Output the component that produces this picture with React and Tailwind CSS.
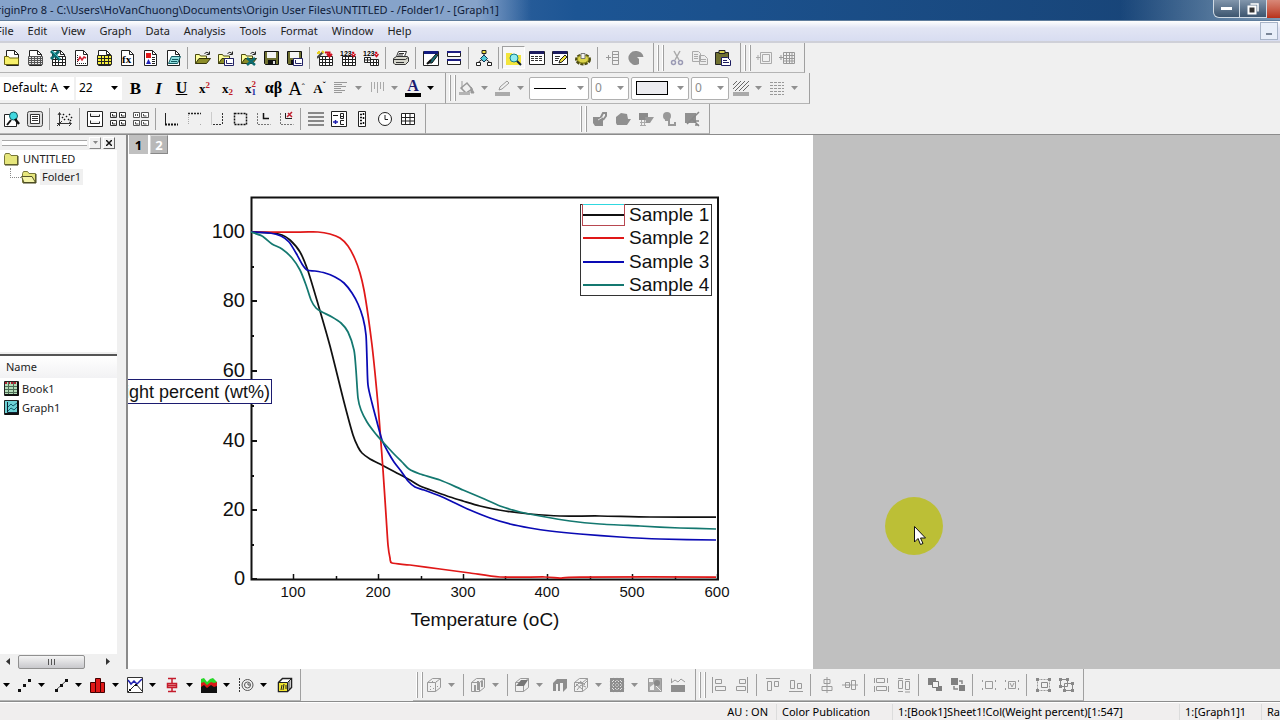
import React from 'react';

// toolbar glyphs, all on a 16x16 grid
const gray = '#9a9a9a';

const page = (
    <>
        <path d="M2.5 .5h8l4 4v11h-12z" fill="#fff" stroke="#222" />
        <path d="M10.5 .5v4h4" fill="none" stroke="#222" />
    </>
);

const grid = <path d="M2.5 6.5h13v9h-13zM2.5 9.5h13M2.5 12.5h13M5.5 6.5v9M8.5 6.5v9M12.5 6.5v9" fill="#fff" stroke="#222" />;

const openFolder = (
    <>
        <path d="M.5 13.5v-9h4l1 1.5h6v2.5" fill="#ffff9c" stroke="#4a4a10" />
        <path d="M.5 13.5l3.5-5h11.5l-4 5z" fill="#8c8c28" stroke="#33330a" />
        <path d="M9.5 3.5q2.5-2.5 4.5 0M14.5 1.5v3h-3" fill="none" stroke="#222" />
    </>
);

const floppy = (
    <>
        <path d="M.5 1.5h14v13h-13l-1-1z" fill="#6f7030" stroke="#111" />
        <path d="M3 2h9v6H3z" fill="#f4f4f4" />
        <path d="M4 10h8v5H4z" fill="#111" />
        <path d="M9 11h2v3H9z" fill="#ddd" />
    </>
);

const cube = (
    <path d="M1.5 5.5l5-4h8v9l-5 4h-8zM1.5 5.5h8v9M9.5 5.5l5-4" fill="none" stroke={gray} />
);

const icons = {
    newProject: <>{page}<path d="M.5 14.5v-8h4l1 1.5h9v6.5z" fill="#f7f06a" stroke="#6b6410" /></>,
    newSheet: <>{page}<path d="M1.5 6.5h14v8h-14zM1.5 8.5h14M1.5 10.5h14M1.5 12.5h14M4.5 6.5v8M7.5 6.5v8M10.5 6.5v8M13.5 6.5v8" fill="#e8e8e8" stroke="#555" /></>,
    newExcel: <>{page}{grid}<path d="M1 1l9 9M9 1L1 9" stroke="#0c6a70" strokeWidth="3" /><path d="M2 1l8 8" stroke="#36c0c4" /></>,
    newGraph: <>{page}<path d="M4.5 5v8.5H13" fill="none" stroke="#222" strokeDasharray="1 1" /><path d="M5 11l2-4 2 3 2-3 2 1" fill="none" stroke="#d02030" strokeWidth="1.5" /></>,
    newMatrix: <>{page}<path d="M1.5 5.5h14v9h-14zM1.5 8.5h14M1.5 11.5h14M5.5 5.5v9M8.5 5.5v9M12.5 5.5v9" fill="#f7f03a" stroke="#222" /></>,
    newFunction: <>{page}<text x="3" y="13" fontSize="11" fontWeight="bold" fontFamily="Liberation Serif, serif">fx</text></>,
    newLayout: <>{page}<path d="M4 3h5v5H4z" fill="#e01818" /><path d="M4 14l2.5-5L9 14z" fill="#22b" /><path d="M10 7.5h3M10 9.5h3M10 11.5h3M10 13.5h3" stroke="#222" /></>,
    newNotes: <>{page}<path d="M3.5 13.5l3-7h9l-3 7z" fill="#8fdede" stroke="#125a60" /><path d="M7 9.5h6M6 11.5h6" stroke="#125a60" /></>,
    open: openFolder,
    openTemplate: <>{openFolder}<path d="M6.5 8.5h9v7h-9z" fill="#fff" stroke="#226" /><path d="M8.5 10v3.5h6" fill="none" stroke="#226" /></>,
    openExcel: <>{openFolder}<path d="M6 8l8 7M14 8l-8 7" stroke="#0c6a70" strokeWidth="2.5" /></>,
    save: floppy,
    saveTemplate: <>{floppy}<path d="M6.5 8.5h9v7h-9z" fill="#fff" stroke="#226" /><path d="M8.5 10v3.5h6" fill="none" stroke="#226" /></>,
    importWizard: <>{grid}<path d="M0 8l6-6" stroke="#444" strokeWidth="2" /><path d="M5 1l2 2M2 1v3M0 3h3" stroke="#e8d020" strokeWidth="2" /><path d="M8 2.5h4.5V5M10 4l2.5 2.5L15 4" fill="none" stroke="#d01020" strokeWidth="2" /></>,
    importAscii: <>{grid}<text x="0" y="6" fontSize="7" fontWeight="bold" fontFamily="Liberation Sans, sans-serif">123</text><path d="M12 2.5h1.5V4M11.5 4L13.5 6.5 15.5 4" fill="none" stroke="#d01020" strokeWidth="1.5" /></>,
    importMulti: <><path d="M1.5 7.5h6v5h-6zM1.5 10h6M4.5 7.5v5M7.5 9.5h8v6h-8zM7.5 12.5h8M10.5 9.5v6M13.5 9.5v6" fill="#fff" stroke="#222" /><text x="0" y="6" fontSize="7" fontWeight="bold" fontFamily="Liberation Sans, sans-serif">123</text><path d="M12 2.5h1.5V4M11.5 4L13.5 6.5 15.5 4" fill="none" stroke="#d01020" strokeWidth="1.5" /></>,
    print: <><path d="M3.5 6.5l2-5h8l-2 5z" fill="#fff" stroke="#333" /><path d="M.5 8.5l3-2h11l1 1v4l-3 3H2l-1.5-1.5z" fill="#d6d6cc" stroke="#333" /><path d="M1 9.5h11.5l2.5-2M6 3.5h5M5 5h5M3 12.5h8" fill="none" stroke="#333" /></>,
    refresh: <><path d="M.5 1.5h15v14H.5z" fill="#fff" stroke="#222" /><path d="M1 1h14v3H1z" fill="#141c80" /><path d="M5 13l8-9 2 1-6 8z" fill="#187078" stroke="#111" /><path d="M4 14l4-4" stroke="#111" strokeWidth="2" /></>,
    duplicate: <><path d="M1.5 1.5h13v5h-13zM1.5 9.5h13v5h-13z" fill="#fff" stroke="#222" /><path d="M1 2h14M1 10h14" stroke="#1c1c80" strokeWidth="2" /></>,
    organize: <><path d="M8 4v8M2.5 12l5.5-4 5.5 4" fill="none" stroke="#222" /><path d="M6 .5h4v3H6z" fill="#f0e040" stroke="#222" /><path d="M8 5l3.5 3.5L8 12 4.5 8.5z" fill="#50c8d8" stroke="#135" /><path d="M.5 12.5h4v3h-4zM11.5 12.5h4v3h-4z" fill="#fff" stroke="#222" /></>,
    explorer: <><path d="M0 3h6l1 2h8v10H0z" fill="#f3e53c" /><circle cx="8" cy="8" r="4" fill="#90ecf0" stroke="#188088" /><path d="M11 11l4 4" stroke="#123" strokeWidth="2" /></>,
    results: <><path d="M.5 1.5h15v13H.5z" fill="#fff" stroke="#222" /><path d="M1 1h14v3H1z" fill="#1c1c60" /><path d="M2 6.5h12M2 8.5h12M2 10.5h12" stroke="#333" strokeDasharray="3 1" /></>,
    script: <><path d="M.5 1.5h15v13H.5z" fill="#fff" stroke="#222" /><path d="M1 1h14v3H1z" fill="#1c1c60" /><path d="M7 13l1-3 5-5 2 2-5 5z" fill="#f0e040" stroke="#222" /><path d="M3 6.5h5M3 8.5h4M3 10.5h3" stroke="#333" /></>,
    codeBuilder: <><ellipse cx="8" cy="9.5" rx="6.5" ry="4.5" fill="#d8cf30" stroke="#4c4a12" strokeWidth="3" strokeDasharray="3 1" /><ellipse cx="8" cy="9" rx="5.5" ry="4" fill="#dcd44c" stroke="#8c8a1c" /><path d="M6 3.5h4v5H6z" fill="#f4f4ee" stroke="#777" /></>,
    addColumn: <path d="M7.5 1.5h6v13h-6zM7.5 4.5h6M7.5 7.5h6M7.5 10.5h6M3.5 5v5M1 7.5h5" fill="none" stroke="#999" />,
    rescale: <path d="M8 1a7 7 0 1 0 3 13V9L9 7h6.500A7 7 0 0 0 8 1z" fill="#8e8e8e" />,
    cut: <><path d="M5 1l5 9M11 1L6 10" stroke="#aaa" strokeWidth="1.5" /><circle cx="4.5" cy="12.5" r="2" fill="none" stroke="#9a9ab4" strokeWidth="1.5" /><circle cx="11.5" cy="12.5" r="2" fill="none" stroke="#9a9ab4" strokeWidth="1.5" /></>,
    copy: <path d="M.5 1.5h6l2 2v8h-8zM2 4.5h4M2 6.5h4M2 8.5h4M7.5 5.5h5l3 3v6h-8zM9 9.5h5M9 11.5h5" fill="#ededed" stroke="#aaa" />,
    paste: <><path d="M.5 2.5h13v12H.5z" fill="#6f7030" stroke="#222" /><path d="M4 .5h6v3H4z" fill="#d8d050" stroke="#222" /><path d="M6.5 7.5h6l3 3v5h-9z" fill="#fff" stroke="#1c1c60" /><path d="M8 10.5h4M8 12.5h6" stroke="#1c1c60" /></>,
    addLayer: <path d="M4.5 2.5h11v11h-11zM6.5 4.5h7v7h-7zM2 5v5M0 7.5h4" fill="none" stroke="#aaa" />,
    addTable: <path d="M4.5 2.5h11v11h-11zM4.5 5.5h11M4.5 8.5h11M4.5 11h11M7.5 2.5v11M10.5 2.5v11M13 2.5v11M2 5v5M0 7.5h4" fill="none" stroke="#999" />,
    align: <path d="M1 2.5h13M1 4.5h8M1 6.5h12M1 8.5h7M1 10.5h11M1 12.5h8" stroke="#999" />,
    vertical: <path d="M2.5 2v10M5.5 2v7M8.5 2v11M11.5 2v7M14.5 2v9" stroke="#aaa" />,
    bucket: <><path d="M2 8l6-5 5 6-6 4z" fill="none" stroke="#999" strokeWidth="1.5" /><path d="M3 1v8M12 7l3 6h-3z" stroke="#999" fill="#999" /><path d="M0 12h11v3H0z" fill="#b4b4b4" /></>,
    pen: <><path d="M4 10l1-3 7-6 2 2-7 6z" fill="none" stroke="#999" /><path d="M0 12h15v4H0z" fill="#aaa" /></>,
    hatch: <><path d="M0 5l4-4M0 9l8-8M2 11L12 1M6 11L16 1M10 11l6-6" stroke="#666" /><path d="M0 12h16v4H0z" fill="#aaa" /></>,
    dashes: <path d="M1 2.5h14M1 5.5h14M1 8.5h14M1 11.5h14M1 14.5h14" stroke="#999" strokeDasharray="3 1" />,
    zoomData: <><path d="M.5 3.5h8l4 3v9H.5z" fill="#fff" stroke="#222" /><circle cx="9.5" cy="5" r="4" fill="#40d8e0" stroke="#145a60" /><path d="M11 8l4 5" stroke="#111" strokeWidth="2.5" /><path d="M3 14l4-5" stroke="#111" strokeWidth="2" /></>,
    fullScreen: <><rect x=".5" y=".5" width="15" height="15" rx="2" fill="#ddd" stroke="#444" /><path d="M3.5 3.5h9v9h-9zM5 5.5h6M5 7.5h6M5 9.5h6" fill="#fff" stroke="#333" /></>,
    scatterZoom: <><path d="M2.5 15V2M0 12.5h14M1 4l1.5-2.5L4 4M12 11l2.5 1.5L12 15M0 15l5-5" fill="none" stroke="#333" /><path d="M6 3h1v1H6zM9 5h1v1H9zM12 3h1v1h-1zM7 8h1v1H7zM11 8h1v1h-1zM14 6h1v1h-1zM5 6h1v1H5zM13 9h1v1h-1z" fill="#111" stroke="#111" strokeWidth=".5" /></>,
    layers2: <path d="M.5.5h15v15H.5zM3.5 2.5v3h9v-2M3.5 9.5v3h9v-2" fill="#fff" stroke="#222" />,
    layers4: <path d="M.5 1.5h6v5h-6zM9.5 1.5h6v5h-6zM.5 9.5h6v5h-6zM9.5 9.5h6v5h-6zM2.5 3v2h3M11.5 3v2h3M2.5 11v2h3M11.5 11v2h3" fill="#fff" stroke="#333" />,
    layersMany: <path d="M.5 1.5h6v5h-6zM8.5 1.5h7v5h-7zM.5 9.5h6v5h-6zM8.5 9.5h7v5h-7zM2.5 3v2M4.5 3v2M10.5 3v2h3M2.5 11v2h3M10.5 11v2h3" fill="#fff" stroke="#555" />,
    axisBL: <><path d="M2.5 2v11" stroke="#222" /><path d="M2 13.5h13" stroke="#111" strokeWidth="2" strokeDasharray="2 1" /></>,
    axisTop: <><path d="M2 2.5h13" stroke="#222" strokeWidth="1.5" strokeDasharray="2 1" /><path d="M2.5 4v10M14 13.5h1" stroke="#aaa" strokeDasharray="1 1" /></>,
    axisRight: <><path d="M2.5 1v13" stroke="#ccc" /><path d="M13.5 2v12M4 13.5h9" stroke="#333" strokeDasharray="2 1" fill="none" /></>,
    axisBox: <path d="M2.5 2.5h12v11h-12z" fill="none" stroke="#111" strokeWidth="1.5" strokeDasharray="2 1" />,
    axisInset: <><path d="M2.5 2v11.5h13" fill="none" stroke="#777" strokeDasharray="2 1" /><path d="M8.5 2v5.5H14" fill="none" stroke="#111" strokeWidth="1.5" /></>,
    axisInsetData: <><path d="M2.5 2v11.5h13" fill="none" stroke="#777" strokeDasharray="2 1" /><path d="M7.5 2v5.5H14" fill="none" stroke="#222" /><path d="M9 6l5-5M10 2l4 4" stroke="#c02030" strokeWidth="1.5" /></>,
    lines: <path d="M0 2h16M0 6h16M0 10h16M0 14h16" stroke="#888" strokeWidth="2" />,
    legend: <><path d="M.5.5h15v15H.5z" fill="#fff" stroke="#222" /><path d="M2 4.5h5" stroke="#111" /><path d="M2 11h5M4.5 9v4" stroke="#2020b0" strokeWidth="1.5" /><path d="M9.5 2.5h3v5h-3zM9.5 5.5h3M13 9.5H9.5v4H13" fill="none" stroke="#222" /></>,
    scaleBar: <><path d="M4.5.5h7v15h-7z" fill="#fff" stroke="#222" /><path d="M6 3.5h2M6 6.5h2M6 9.5h2M6 12.5h2M9.5 2v2M9.5 6v2M9.5 11v2" stroke="#111" strokeWidth="1.5" /></>,
    clock: <><circle cx="8" cy="8" r="6.5" fill="#fff" stroke="#222" /><path d="M8 4v4.5h3" fill="none" stroke="#222" /></>,
    table: <path d="M1.5 2.5h13v11h-13zM1.5 6.5h13M1.5 10h13M5.5 2.5v11M10 2.5v11" fill="#fff" stroke="#222" />,
    mask1: <><path d="M1 6h10v9H3l-2-3z" fill="#8e8e8e" /><path d="M8 8l3-6h3v3l-3 4" fill="none" stroke="#8e8e8e" strokeWidth="2" /><path d="M6 9l5-3" stroke="#ddd" /></>,
    mask2: <path d="M1 6l5-4 6 1 1 5h3l-4 6H2l-1-2z" fill="#909090" />,
    mask3: <><path d="M1 2h9v7H1z" fill="#8a8a8a" /><path d="M7 6h9l-4 6H8z" fill="#999" /><path d="M2 11.5h6M2 14.5h6M3.5 9v6M6.5 9v6" stroke="#aaa" /></>,
    mask4: <><circle cx="6" cy="5" r="4" fill="#999" /><path d="M4 9h4v5h6v-3" stroke="#999" fill="none" strokeWidth="2" /></>,
    mask5: <><path d="M1 2h11v10H1z" fill="#909090" /><path d="M15 1L3 13M8 8l7 7M10 10h5M11 14h4" stroke="#888" strokeWidth="1.5" /></>,
    scatter: <path d="M2 12h3v3H2zM7 7h3v3H7zM12 2h3v3h-3z" fill="#111" />,
    lineSymbol: <><path d="M3 13L14 3" stroke="#444" /><path d="M2 12h3v3H2zM7 7h3v3H7zM12 2h3v3h-3z" fill="#111" /></>,
    column: <path d="M.5 5.5h5v10h-5zM5.5 1.5h5v14h-5zM10.5 5.5h4v10h-4z" fill="#e01818" stroke="#400" />,
    multiPlot: <><path d="M.5.5h15v15H.5z" fill="#fff" stroke="#333" /><path d="M1 3l3 4 3-3 3 3 5-5" fill="none" stroke="#2424b0" strokeWidth="1.5" /><path d="M1 15l8-8 6 7" fill="none" stroke="#222" /><path d="M2 12h2v2H2zM8 7h2v2H8z" fill="#111" /></>,
    boxPlot: <path d="M4 1.5h8M8 2v4M3.5 6.5h9v4h-9zM3 8.5h10M8 11v4M4 14.5h8" fill="#f5b8b8" stroke="#c41c2c" strokeWidth="1.5" />,
    area: <><path d="M0 2l3-1 3 4 3-3 3-1 4 4v10H0z" fill="#28d828" /><path d="M0 6l3-1 3 3 4-3 3 1 3-1v9H0z" fill="#d81818" /><path d="M0 10l3-2 3 3 4-3 3 2 3-1v7H0z" fill="#111" /></>,
    polar: <><path d="M1.5 1v14" stroke="#333" strokeDasharray="2 1" /><circle cx="9.5" cy="8" r="5.5" fill="none" stroke="#555" /><circle cx="9.5" cy="8" r="3" fill="none" stroke="#555" /><path d="M9 7h2v2" fill="none" stroke="#555" /></>,
    cube3d: <><path d="M1.5 5.5l4-4h9v9l-4 4h-9z" fill="#fff" stroke="#222" strokeWidth="1.5" /><path d="M2 6h8v8H2z" fill="#f0e430" /><path d="M10.5 14V5.5l4-4M2 5.5h8.5M4 13l1-5M6 13l1-6M9 12V8M12 4v8" fill="none" stroke="#222" /></>,
    cubeDots: <>{cube}<path d="M4 9h1v1H4zM7 11h1v1H7zM6 4h1v1H6zM10 4h1v1h-1zM11 9h1v1h-1zM4 12h1v1H4z" fill={gray} /></>,
    cubeBars: <>{cube}<path d="M4 8h2v6H4zM7 4h2v9H7zM11 4h2v6h-2z" fill={gray} /></>,
    cubeSurface: <>{cube}<path d="M2 9l5-6h7l-4 6z" fill="#777" /></>,
    cubeWalls: <path d="M1 6l4-4h10v9l-4 4V6H8v8H6V7H4v7H1z" fill="#8e8e8e" />,
    cubeWire: <>{cube}<path d="M2 10l4-4 5 1 3-3M4 13l4-5 5 2M3 7l6 5M7 4l5 4" fill="none" stroke={gray} /></>,
    contour: <><path d="M1 1h14v14H1z" fill="#8e8e8e" /><path d="M0 4.5h16M0 8h16M0 11.5h16M4.5 0v16M8 0v16M11.5 0v16" stroke="#e4e4e4" strokeDasharray="1 2" /></>,
    image: <><path d="M1.5 1.5h13v13h-13z" fill="#aaa" stroke={gray} /><path d="M2 2h4v3H2zM3 10l4-3v6H3z" fill="#eee" /><circle cx="10" cy="6" r="3" fill="#888" /><path d="M9 9l5 5" stroke="#eee" /></>,
    profile: <><path d="M1 8h14v7H1z" fill="#8e8e8e" /><path d="M1.5 6V1.5M1 6l4-3 3 2 3-3 4 3" fill="none" stroke={gray} /></>,
    alignLeft: <path d="M1.5 0v16M4.5 2.5h6v4h-6zM4.5 9.5h10v4h-10z" fill="none" stroke={gray} />,
    alignRight: <path d="M13.5 0v16M5.5 2.5h6v4h-6zM2.5 9.5h9v4h-9z" fill="none" stroke={gray} />,
    alignTop: <path d="M1 1.5h14M2.5 4.5h4v9h-4zM9.5 4.5h4v5h-4z" fill="none" stroke={gray} />,
    alignBottom: <path d="M1 14.5h14M2.5 3.5h4v8h-4zM9.5 6.5h4v5h-4z" fill="none" stroke={gray} />,
    centerV: <path d="M8 0v16M5 2.5h6v4H5zM3 9.5h10v4H3z" fill="none" stroke={gray} />,
    centerH: <path d="M0 8h16M3.5 5.5h4v5h-4zM9.5 3.5h4v9h-4z" fill="none" stroke={gray} />,
    sameWidth: <path d="M3.5 1.5h8v4h-8zM3.5 9.5h10v4h-10zM1.5 1v5M14.5 1v5M1.5 9v6M15.5 9v6" fill="none" stroke={gray} />,
    sameHeight: <path d="M2.5 3.5h4v8h-4zM9.5 4.5h4v8h-4zM2 1.5h5M2 14.5h5M9 2.5h5M9 15h5" fill="none" stroke={gray} />,
    front: <><path d="M1 1h8v7H1zM9 9h6v5H9z" fill="#808080" /><path d="M5.5 4.5h6v6h-6z" fill="#f4f4f4" stroke="#777" /></>,
    back: <><path d="M1 1h7v7H1zM9 8h6v6H9z" fill="#808080" /><path d="M4 9v3h4M9 4h3v3" fill="none" stroke="#888" strokeWidth="1.5" /></>,
    frontData: <path d="M4.5 4.5h7v7h-7zM1.5 3v2M1.5 11v2M14.5 3v2M14.5 11v2" fill="none" stroke={gray} />,
    backData: <path d="M4.5 4.5h7v7h-7zM6 6l2 4 2-4M1.5 3v2M1.5 11v2M14.5 3v2M14.5 11v2" fill="none" stroke={gray} />,
    group: <><path d="M2.5 2.5h12v11h-12z" fill="none" stroke={gray} strokeDasharray="2 1" /><path d="M1 1h3v3H1zM13 1h3v3h-3zM1 12h3v3H1zM13 12h3v3h-3z" fill="#888" /><path d="M6.5 5.5h6v5h-6z" fill="none" stroke="#888" /></>,
    ungroup: <><path d="M2.5 2.5h7v7h-7zM6.5 6.5h8v7h-8z" fill="none" stroke="#888" /><path d="M1 1h3v3H1zM8 1h3v3H8zM1 8h3v3H1zM5 12h3v3H5zM13 12h3v3h-3zM13 5h3v3h-3z" fill="#888" /></>,
};

const textIcons = {
    bold: <span className="text-[17px] font-bold">B</span>,
    italic: <span className="text-[17px] font-bold italic">I</span>,
    underline: <span className="text-[16px] font-bold underline">U</span>,
    superscript: <span className="text-[13px] font-bold">x<sup className="text-[9px] text-[#c01c28]">2</sup></span>,
    subscript: <span className="text-[13px] font-bold">x<sub className="text-[9px] text-[#c01c28]">2</sub></span>,
    supersub: (
        <span className="flex items-center text-[13px] font-bold">
            x
            <span className="flex flex-col text-[9px] leading-[8px]">
                <span className="text-[#c01c28]">2</span>
                <span className="text-[#1c2ca0]">1</span>
            </span>
        </span>
    ),
    greek: <span className="text-[16px] font-bold">αβ</span>,
    grow: <span className="text-[19px]">A<sup className="text-[9px]">ˆ</sup></span>,
    shrink: <span className="text-[13px] font-bold">A<sup className="text-[9px]">ˇ</sup></span>,
    fontColor: <span className="flex h-[17px] items-center border-b-4 border-black px-0.5 text-[16px] font-bold text-[#1c1c70]">A</span>,
};

const dimDrops = ['align', 'vertical', 'bucket', 'pen', 'hatch', 'dashes', 'cubeDots', 'cubeBars', 'cubeSurface', 'cubeWire', 'contour'];

const Arrow = ({ dim }) => (
    <svg width="7" height="4" viewBox="0 0 7 4" className={dim ? 'text-[#909090]' : 'text-black'}>
        <path d="M0 0h7L3.5 4z" fill="currentColor" />
    </svg>
);

const Glyph = ({ name }) =>
    textIcons[name] || (
        <svg width="16" height="16" viewBox="0 0 16 16">
            {icons[name]}
        </svg>
    );

const ToolButton = ({ name, pressed }) => (
    <button
        aria-label={name}
        className={`flex h-[23px] w-[23px] shrink-0 items-center justify-center font-['Liberation_Serif',serif] leading-none text-black ${
            pressed ? 'border border-[#a0a0a0] border-r-white border-b-white bg-[#f8f8f8]' : ''
        }`}
    >
        <Glyph name={name} />
    </button>
);

const DropButton = ({ name }) => (
    <div className="flex h-[23px] w-[36px] shrink-0 items-center">
        <button aria-label={name} className="flex w-[20px] items-center justify-center font-['Liberation_Serif',serif] leading-none">
            <Glyph name={name} />
        </button>
        <button aria-label={`${name} options`} className="flex h-full w-[14px] items-center justify-center">
            <Arrow dim={dimDrops.includes(name)} />
        </button>
    </div>
);

// "|" is a separator, a trailing ">" adds the drop-down arrow
const Tools = ({ items, loose }) =>
    items.map((item, i) => {
        if (item === '|') return <div key={i} className={`ml-[3px] h-[22px] w-px shrink-0 bg-[#a0a0a0] ${loose ? 'mr-1' : 'mr-[3px]'}`} />;
        if (item.endsWith('>')) return <DropButton key={i} name={item.slice(0, -1)} />;
        return <ToolButton key={i} name={item} pressed={item === 'explorer'} />;
    });

const Grip = () => (
    <div className="mr-px flex h-full shrink-0 items-center gap-[3px] pl-[3px]">
        <div className="h-[26px] w-[2px] border-r border-[#a0a0a0] bg-white" />
        <div className="h-[26px] w-[2px] border-r border-[#a0a0a0] bg-white" />
    </div>
);

const Bar = ({ children, className = '' }) => (
    <div className={`flex h-full shrink-0 items-center border-r border-b border-r-[#a0a0a0] border-b-[#b4b4b4] pr-1.5 ${className}`}>{children}</div>
);

const Combo = ({ label, value, width, dim, children }) => (
    <div className={`relative mr-0.5 flex h-[23px] shrink-0 items-center ${width} ${dim ? 'rounded-xs border border-[#b0b0b0] bg-white' : 'bg-white'}`}>
        <select aria-label={label} className={`h-full w-full appearance-none truncate pl-[3px] text-[12px] ${dim ? 'text-[#8c8c8c]' : 'text-black'}`}>
            <option>{value}</option>
        </select>
        {children}
        <div className="pointer-events-none absolute right-1 flex">
            <Arrow dim={dim} />
        </div>
    </div>
);

const menus = ['File', 'Edit', 'View', 'Graph', 'Data', 'Analysis', 'Tools', 'Format', 'Window', 'Help'];

const TitleBar = () => (
    <header className="flex h-[21px] shrink-0 items-center justify-between overflow-hidden border-b border-[#5f7c9c] bg-linear-to-r from-[#7e9dc6] via-[#1c5594] via-45% to-[#174172]">
        <h1 className="-ml-3 flex h-full items-center bg-linear-to-r from-[#86a3ca] from-90% to-transparent pr-8 whitespace-pre text-[#101c38]">
            OriginPro 8 - C:\Users\HoVanChuong\Documents\Origin User Files\UNTITLED - /Folder1/ - [Graph1]
        </h1>
        <div className="flex h-full w-[160px] items-start justify-end bg-linear-to-r from-transparent to-[#7d9ab5]">
            <button aria-label="Minimize" className="flex h-[18px] w-[27px] items-center justify-center rounded-bl-md border border-t-0 border-[#d0dae4] bg-linear-to-b from-[#8296ac] to-[#3c556f]">
                <span className="h-[3px] w-[11px] bg-white" />
            </button>
            <button aria-label="Restore" className="flex h-[18px] w-[27px] items-center justify-center border-r border-b border-[#d0dae4] bg-linear-to-b from-[#8296ac] to-[#3c556f]">
                <svg width="12" height="12" viewBox="0 0 12 12">
                    <path d="M3.5 1h7.5v7.5" fill="none" stroke="#fff" strokeWidth="1.5" />
                    <path d="M1.5 3.5h7v7h-7z" fill="#333" stroke="#fff" strokeWidth="2" />
                </svg>
            </button>
            <button aria-label="Close" className="h-[18px] w-[13px] bg-linear-to-b from-[#d88878] to-[#b83018]" />
        </div>
    </header>
);

const MenuBar = () => (
    <nav className="flex h-[22px] shrink-0 items-center justify-between border-b-2 border-[#cfd0d8] bg-linear-to-b from-white via-[#e2e5f4] via-35% to-[#d8ddf1]">
        <div className="-ml-1 flex gap-3.5 text-[#222]">
            {menus.map((menu) => (
                <button key={menu}>{menu}</button>
            ))}
        </div>
        <button aria-label="Minimize window" className="mr-0.5 flex h-[18px] w-[18px] items-end justify-center border border-[#a8b4c8] bg-[#e8eef9] pb-1">
            <span className="h-[2px] w-[6px] bg-[#7a8698]" />
        </button>
    </nav>
);

const Toolbars = () => (
    <div className="shrink-0 bg-[#f0f0f0]">
        <div className="flex h-[30px]">
            <Bar>
                <Tools items={['newProject', 'newSheet', 'newExcel', 'newGraph', 'newMatrix', 'newFunction', 'newLayout', 'newNotes', '|', 'open', 'openTemplate', 'openExcel', 'save', 'saveTemplate', '|', 'importWizard', 'importAscii', 'importMulti', '|', 'print', '|', 'refresh', 'duplicate', '|', 'organize', '|', 'explorer', 'results', 'script', 'codeBuilder', '|', 'addColumn', 'rescale']} />
            </Bar>
            <Bar>
                <Grip />
                <Tools items={['cut', 'copy', 'paste']} />
            </Bar>
            <Bar>
                <Grip />
                <Tools items={['addLayer', 'addTable']} />
            </Bar>
        </div>
        <div className="flex h-[31px]">
            <Bar>
                <Combo label="Font" value="Default: A" width="w-[74px]" />
                <Combo label="Font size" value="22" width="w-[46px]" />
                <Tools items={['bold', 'italic', 'underline', 'superscript', 'subscript', 'supersub', 'greek', 'grow', 'shrink', 'align>', 'vertical>', 'fontColor>']} />
            </Bar>
            <Bar>
                <Grip />
                <Tools items={['bucket>', 'pen>']} />
                <Combo label="Line style" width="w-[60px]" dim>
                    <span className="pointer-events-none absolute left-1 h-px w-8 bg-black" />
                </Combo>
                <Combo label="Line width" value="0" width="w-[38px]" dim />
                <Combo label="Border color" width="w-[58px]" dim>
                    <span className="pointer-events-none absolute left-1 h-[14px] w-8 border border-black bg-[#ececf0]" />
                </Combo>
                <Combo label="Border width" value="0" width="w-[38px]" dim />
                <Tools items={['hatch>', 'dashes>']} />
            </Bar>
        </div>
        <div className="flex h-[31px] border-b border-[#8c8c8c]">
            <Bar>
                <Tools items={['zoomData', 'fullScreen', '|', 'scatterZoom', '|', 'layers2', 'layers4', 'layersMany', '|', 'axisBL', 'axisTop', 'axisRight', 'axisBox', 'axisInset', 'axisInsetData', '|', 'lines', 'legend', 'scaleBar', 'clock', 'table']} />
            </Bar>
            <div className="w-[151px] border-b border-[#b4b4b4]" />
            <Bar>
                <Grip />
                <Tools items={['mask1', 'mask2', 'mask3', 'mask4', 'mask5']} />
            </Bar>
        </div>
    </div>
);

const Folder = ({ open }) => (
    <svg width="16" height="14" viewBox="0 0 16 14" className="shrink-0">
        <path d="M1.5 12.5v-9l1-2h4l1.5 2h6.5v9z" fill="#e6e67c" stroke="#77773a" />
        {open && <path d="M3 12.5L.5 6.5h10.5l3.5 6z" fill="#f4f4a8" stroke="#55552a" />}
        <path d="M2 13h13V4" fill="none" stroke="#44441c" />
    </svg>
);

const files = [
    {
        name: 'Book1',
        icon: (
            <>
                <path d="M.5.5h14v14H.5z" fill="#b4dcb8" stroke="#222" />
                <path d="M1 2h13" stroke="#b02030" strokeWidth="2" strokeDasharray="2 1" />
                <path d="M1 5.5h13M1 8.5h13M1 11.5h13M4.5 1v13M9.5 1v13" stroke="#4c6c54" />
                <path d="M1 14h13.5M14 1v13" stroke="#111" strokeWidth="2" />
            </>
        ),
    },
    {
        name: 'Graph1',
        icon: (
            <>
                <path d="M.5.5h14v14H.5z" fill="#6cd0d4" stroke="#222" />
                <path d="M3.5 2v10.5H13" fill="none" stroke="#123" />
                <path d="M4 7l3-3 2 2 4-3M4 11l3-3 3 2 3-3" fill="none" stroke="#126070" />
                <path d="M1 14h13.5M14 1v13" stroke="#111" strokeWidth="2" />
            </>
        ),
    },
];

const ProjectExplorer = () => (
    <aside className="flex w-[128px] shrink-0 flex-col border-r-2 border-[#8a8a8a] bg-[#f0f0f0] pr-[9px] text-[#222]">
        <div className="flex h-[15px] shrink-0 items-center gap-[2px] pr-0.5 pl-0.5">
            <div className="h-[6px] flex-1 border-y border-[#a8a8a8] bg-white" />
            <button aria-label="Panel menu" className="flex h-[12px] w-[12px] items-center justify-center border border-white border-r-[#888] border-b-[#888]">
                <svg width="5" height="3" viewBox="0 0 5 3"><path d="M0 0h5L2.5 3z" fill="#888" /></svg>
            </button>
            <button aria-label="Close panel" className="flex h-[12px] w-[12px] items-center justify-center border border-white border-r-[#666] border-b-[#666]">
                <svg width="6" height="6" viewBox="0 0 6 6"><path d="M0 0l6 6M6 0L0 6" stroke="#111" strokeWidth="1.5" /></svg>
            </button>
        </div>
        <div className="h-[202px] shrink-0 bg-white pl-[3px]">
            <div className="flex h-[18px] items-center gap-1">
                <Folder />
                <span>UNTITLED</span>
            </div>
            <div className="flex h-[18px] items-center pl-[7px]">
                <div className="h-[10px] w-[11px] self-start border-b border-l border-dotted border-[#888]" />
                <Folder open />
                <span className="ml-[3px] bg-[#f0f0f0] px-0.5">Folder1</span>
            </div>
        </div>
        <div className="mt-0.5 flex h-[24px] shrink-0 items-center border-t-2 border-[#555] bg-linear-to-b from-white to-[#f2f2f4] pl-1.5">Name</div>
        <ul className="flex-1 bg-white pt-px pl-1">
            {files.map((file) => (
                <li key={file.name} className="flex h-[19px] items-center gap-[3px]">
                    <svg width="15" height="15" viewBox="0 0 15 15">{file.icon}</svg>
                    <span>{file.name}</span>
                </li>
            ))}
        </ul>
        <div className="flex h-[15px] shrink-0 items-center gap-1.5 pl-1">
            <button aria-label="Scroll left" className="flex w-[8px] justify-center">
                <svg width="4" height="7" viewBox="0 0 4 7"><path d="M4 0v7L0 3.5z" fill="#333" /></svg>
            </button>
            <div className="flex h-[14px] w-[67px] items-center justify-center gap-[2px] rounded-xs border border-[#909090] bg-linear-to-b from-[#f4f4f4] to-[#c8c8cc]">
                <span className="h-[6px] w-px bg-[#555]" />
                <span className="h-[6px] w-px bg-[#555]" />
                <span className="h-[6px] w-px bg-[#555]" />
            </div>
            <button aria-label="Scroll right" className="ml-auto flex w-[18px] justify-center">
                <svg width="4" height="7" viewBox="0 0 4 7"><path d="M0 0v7l4-3.5z" fill="#333" /></svg>
            </button>
        </div>
    </aside>
);

const series = [
    {
        name: 'Sample 1',
        color: '#111111',
        points: [[251, 232], [272, 233], [282, 235], [290, 240], [300, 252], [308, 271], [318, 304], [330, 346], [344, 402], [353, 435], [358, 447], [362, 453], [370, 459], [380, 464], [395, 472], [410, 480], [420, 486], [436, 492], [450, 497], [463, 501], [480, 506], [505, 511], [530, 514], [560, 516], [600, 516], [650, 517], [716, 517]],
    },
    {
        name: 'Sample 2',
        color: '#e01818',
        points: [[251, 232], [300, 232], [318, 232], [330, 234], [340, 238], [348, 246], [355, 259], [360, 273], [364, 290], [368, 315], [372, 345], [375, 373], [378, 405], [380, 430], [383, 470], [386, 515], [388, 545], [390, 558], [392, 563], [410, 565], [440, 569], [470, 573], [500, 577], [545, 577], [560, 578], [580, 577], [716, 577]],
    },
    {
        name: 'Sample 3',
        color: '#0a0ab4',
        points: [[251, 232], [270, 233], [281, 236], [289, 242], [296, 253], [302, 264], [307, 270], [315, 271], [325, 273], [335, 277], [344, 283], [352, 293], [358, 304], [363, 318], [366, 335], [367, 360], [368, 385], [372, 403], [377, 422], [382, 440], [388, 452], [394, 462], [401, 471], [408, 481], [415, 487], [424, 490], [440, 496], [455, 503], [470, 510], [490, 518], [510, 524], [530, 528], [550, 531], [580, 534], [620, 537], [660, 539], [716, 540]],
    },
    {
        name: 'Sample 4',
        color: '#147870',
        points: [[251, 232], [262, 236], [272, 244], [282, 249], [292, 258], [300, 270], [306, 285], [311, 300], [316, 308], [322, 312], [332, 317], [341, 323], [348, 332], [354, 350], [356, 370], [358, 398], [361, 410], [367, 422], [375, 433], [382, 441], [394, 454], [402, 462], [409, 469], [420, 474], [440, 480], [463, 490], [482, 498], [500, 506], [520, 512], [540, 516], [570, 521], [600, 524], [640, 526], [680, 528], [716, 529]],
    },
];

// smooth path through the points
const toPath = (pts) =>
    pts.reduce((d, p, i) => {
        if (i === 0) return `M${p[0]} ${p[1]}`;
        const p0 = pts[i - 2] || pts[i - 1];
        const p1 = pts[i - 1];
        const p3 = pts[i + 1] || p;
        return `${d}C${p1[0] + (p[0] - p0[0]) / 8} ${p1[1] + (p[1] - p0[1]) / 8} ${p[0] - (p3[0] - p1[0]) / 8} ${p[1] - (p3[1] - p1[1]) / 8} ${p[0]} ${p[1]}`;
    }, '');

const yTicks = [[100, 232], [80, 301], [60, 371], [40, 441], [20, 510], [0, 579]];
const xTicks = [[100, 293], [200, 378], [300, 463], [400, 547], [500, 632], [600, 717]];

const Chart = () => (
    <svg width="685" height="513" viewBox="128 154 685 513" fontFamily="Liberation Sans, Arial, sans-serif" fill="#111">
        <rect x="251.5" y="197.5" width="466.5" height="382" fill="none" stroke="#111" strokeWidth="2" />
        {yTicks.map(([value, y]) => (
            <g key={value}>
                <path d={`M251 ${y}h6`} stroke="#111" strokeWidth="2" />
                {value > 0 && <path d={`M251 ${y + 35}h3`} stroke="#111" strokeWidth="2" />}
                <text x="245" y={y + 6} fontSize="20" textAnchor="end">{value}</text>
            </g>
        ))}
        {xTicks.map(([value, x]) => (
            <g key={value}>
                <path d={`M${x + 0.5} 579v-5`} stroke="#111" strokeWidth="1.5" />
                {value > 100 && <path d={`M${x - 41.5} 579v-3`} stroke="#111" strokeWidth="1.5" />}
                <text x={x} y="597" fontSize="15" textAnchor="middle">{value}</text>
            </g>
        ))}
        {series.map((s) => (
            <path key={s.name} d={toPath(s.points)} fill="none" stroke={s.color} strokeWidth="1.75" />
        ))}
        <text x="485" y="626" fontSize="19" textAnchor="middle">Temperature (oC)</text>

        <rect x="100.5" y="379.5" width="171" height="24" fill="#fff" stroke="#1c1c70" />
        <text x="270" y="398" fontSize="18" textAnchor="end">Weight percent (wt%)</text>

        <rect x="580.5" y="204.5" width="131" height="91" fill="#fff" stroke="#333" />
        <rect x="582.5" y="204.5" width="42" height="21" fill="none" stroke="#b84850" />
        <path d="M583 204.5h41" stroke="#30d8e0" />
        {series.map((s, i) => (
            <g key={s.name}>
                <path d={`M583 ${215 + Math.round(i * 23.4)}h41`} stroke={s.color} strokeWidth="2" />
                <text x="629" y={221 + Math.round(i * 23.4)} fontSize="19">{s.name}</text>
            </g>
        ))}
    </svg>
);

const GraphWindow = () => (
    <section className="w-[685px] shrink-0 overflow-hidden bg-white">
        <div className="flex h-[19px] items-stretch gap-0.5 pl-px text-[13px] font-bold">
            <button className="w-[19px] bg-[#c0c0c0] text-black">1</button>
            <button className="w-[18px] border border-[#d8d8d8] border-r-[#888] border-b-[#888] bg-[#b8b8b8] text-white">2</button>
        </div>
        <Chart />
    </section>
);

const BottomToolbar = () => (
    <div className="flex h-[33px] shrink-0 items-stretch border-b border-[#8c8c8c] bg-[#f0f0f0]">
        <Bar className="w-[301px] gap-px">
            <button aria-label="line options" className="flex w-[13px] shrink-0 items-center justify-center"><Arrow /></button>
            <Tools items={['scatter>', 'lineSymbol>', 'column>', 'multiPlot>', 'boxPlot>', 'area>', 'polar>', 'cube3d']} />
        </Bar>
        <div className="w-[112px]" />
        <Bar>
            <Grip />
            <Tools loose items={['cubeDots>', '|', 'cubeBars>', '|', 'cubeSurface>', 'cubeWalls', 'cubeWire>', 'contour>', 'image', 'profile']} />
        </Bar>
        <Bar>
            <Grip />
            <Tools loose items={['alignLeft', 'alignRight', '|', 'alignTop', 'alignBottom', '|', 'centerV', 'centerH', '|', 'sameWidth', 'sameHeight', '|', 'front', 'back', '|', 'frontData', 'backData', '|', 'group', 'ungroup']} />
        </Bar>
    </div>
);

const StatusBar = () => (
    <footer className="flex h-[18px] shrink-0 items-center justify-end overflow-hidden border-t border-white bg-[#f0eeee] whitespace-nowrap text-black">
        <span className="border-r border-[#dcdcdc] pr-2">AU : ON</span>
        <span className="w-[116px] border-r border-[#dcdcdc] pl-[5px]">Color Publication</span>
        <span className="w-[287px] border-r border-[#dcdcdc] pl-[5px]">1:[Book1]Sheet1!Col(Weight percent)[1:547]</span>
        <span className="w-[82px] border-r border-[#dcdcdc] pl-[5px]">1:[Graph1]1</span>
        <span className="w-[18px] overflow-hidden pl-[5px]">Radian</span>
    </footer>
);

const App = () => (
    <div className="relative flex h-screen flex-col overflow-hidden bg-[#f0f0f0] font-['Noto_Sans','Open_Sans',sans-serif] text-[11px] leading-[16px]">
        <TitleBar />
        <MenuBar />
        <Toolbars />
        <main className="flex min-h-0 flex-1 bg-[#c0c0c0]">
            <ProjectExplorer />
            <GraphWindow />
        </main>
        <BottomToolbar />
        <StatusBar />

        {/* mouse pointer with its highlight */}
        <div className="pointer-events-none absolute top-[497px] left-[885px] h-[58px] w-[58px] rounded-full bg-[#bcbf36]">
            <svg width="13" height="20" viewBox="0 0 13 20" className="absolute top-[29px] left-[29px]">
                <path d="M.5.5v15.5l3.5-3.5 2.5 6 2.5-1-2.5-5.5h5z" fill="#fff" stroke="#111" />
            </svg>
        </div>
    </div>
);

export default App;
